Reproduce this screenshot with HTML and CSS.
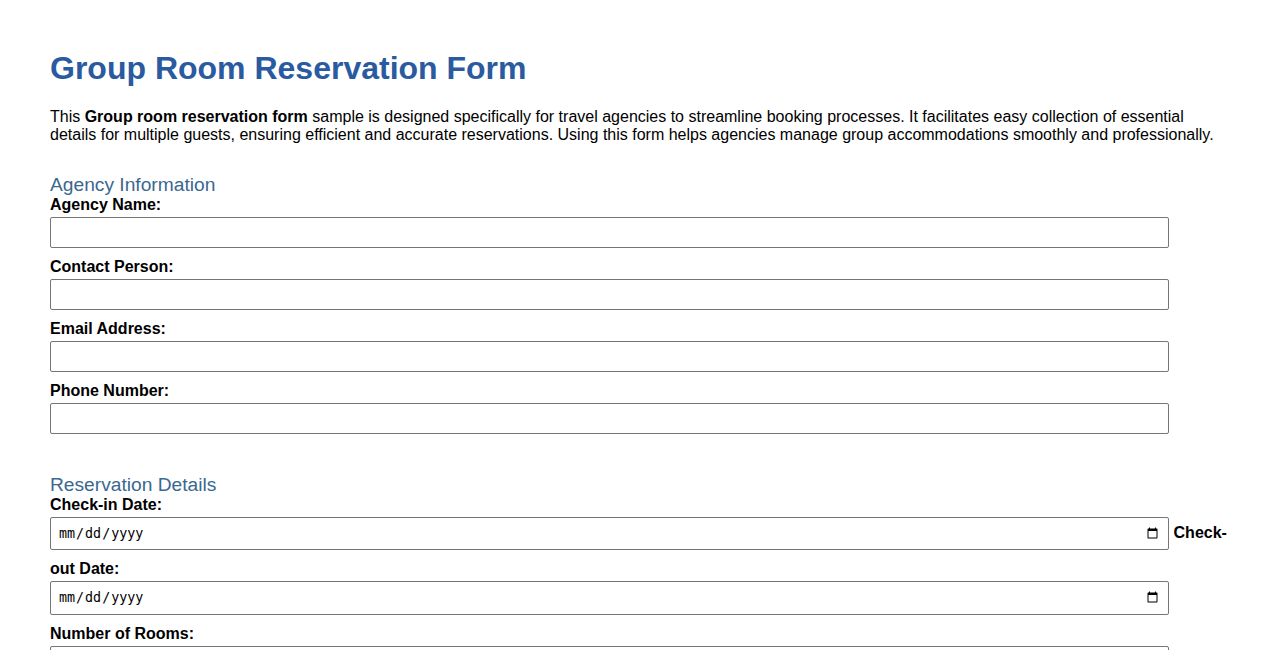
FILE: index.html
```html
<!DOCTYPE html>
<html lang="en">
<head>
<meta charset="utf-8">
<title>Group Room Reservation Form</title>
<link rel="stylesheet" href="styles.css">
</head>
<body>
<h1 class="title">Group Room Reservation Form</h1>
<p class="intro">This <strong>Group room reservation form</strong> sample is designed specifically for travel agencies to streamline booking processes. It facilitates easy collection of essential details for multiple guests, ensuring efficient and accurate reservations. Using this form helps agencies manage group accommodations smoothly and professionally.</p>
<form class="form">
<div class="section">
<h2 class="section-title">Agency Information</h2>
<label class="field-label" for="agency">Agency Name:</label>
<input class="field field-block" type="text" id="agency">
<label class="field-label" for="contact">Contact Person:</label>
<input class="field field-block" type="text" id="contact">
<label class="field-label" for="email">Email Address:</label>
<input class="field field-block" type="email" id="email">
<label class="field-label" for="phone">Phone Number:</label>
<input class="field field-block" type="tel" id="phone">
</div>
<div class="section">
<h2 class="section-title">Reservation Details</h2>
<label class="field-label" for="checkin">Check-in Date:</label>
<input class="field" type="date" id="checkin">
<label class="field-label" for="checkout">Check-out Date:</label>
<input class="field" type="date" id="checkout">
<label class="field-label" for="rooms">Number of Rooms:</label>
<input class="field field-block" type="number" id="rooms">
</div>
</form>
</body>
</html>
```
FILE: styles.css
```css
body {
  margin: 50px;
  font-family: "Liberation Sans", Arial, sans-serif;
  font-size: 16px;
  color: #000;
  background: #fff;
}
.title {
  font-size: 32px;
  font-weight: bold;
  color: #2a5aa0;
  margin: 0 0 21px;
}
.intro {
  margin: 0 0 16px;
  line-height: normal;
}
.section {
  margin-bottom: 40px;
}
.section-title {
  font-size: 19.2px;
  font-weight: normal;
  color: #3a6890;
  margin: 30px 0 0;
}
.field-label {
  font-weight: bold;
}
.field {
  width: 95%;
  box-sizing: border-box;
  padding: 7px;
  margin: 3px 0 10px;
  border: 1px solid #767676;
  border-radius: 2px;
}
.field-block {
  display: block;
  margin-top: 3px;
  margin-bottom: 10px;
}
```
